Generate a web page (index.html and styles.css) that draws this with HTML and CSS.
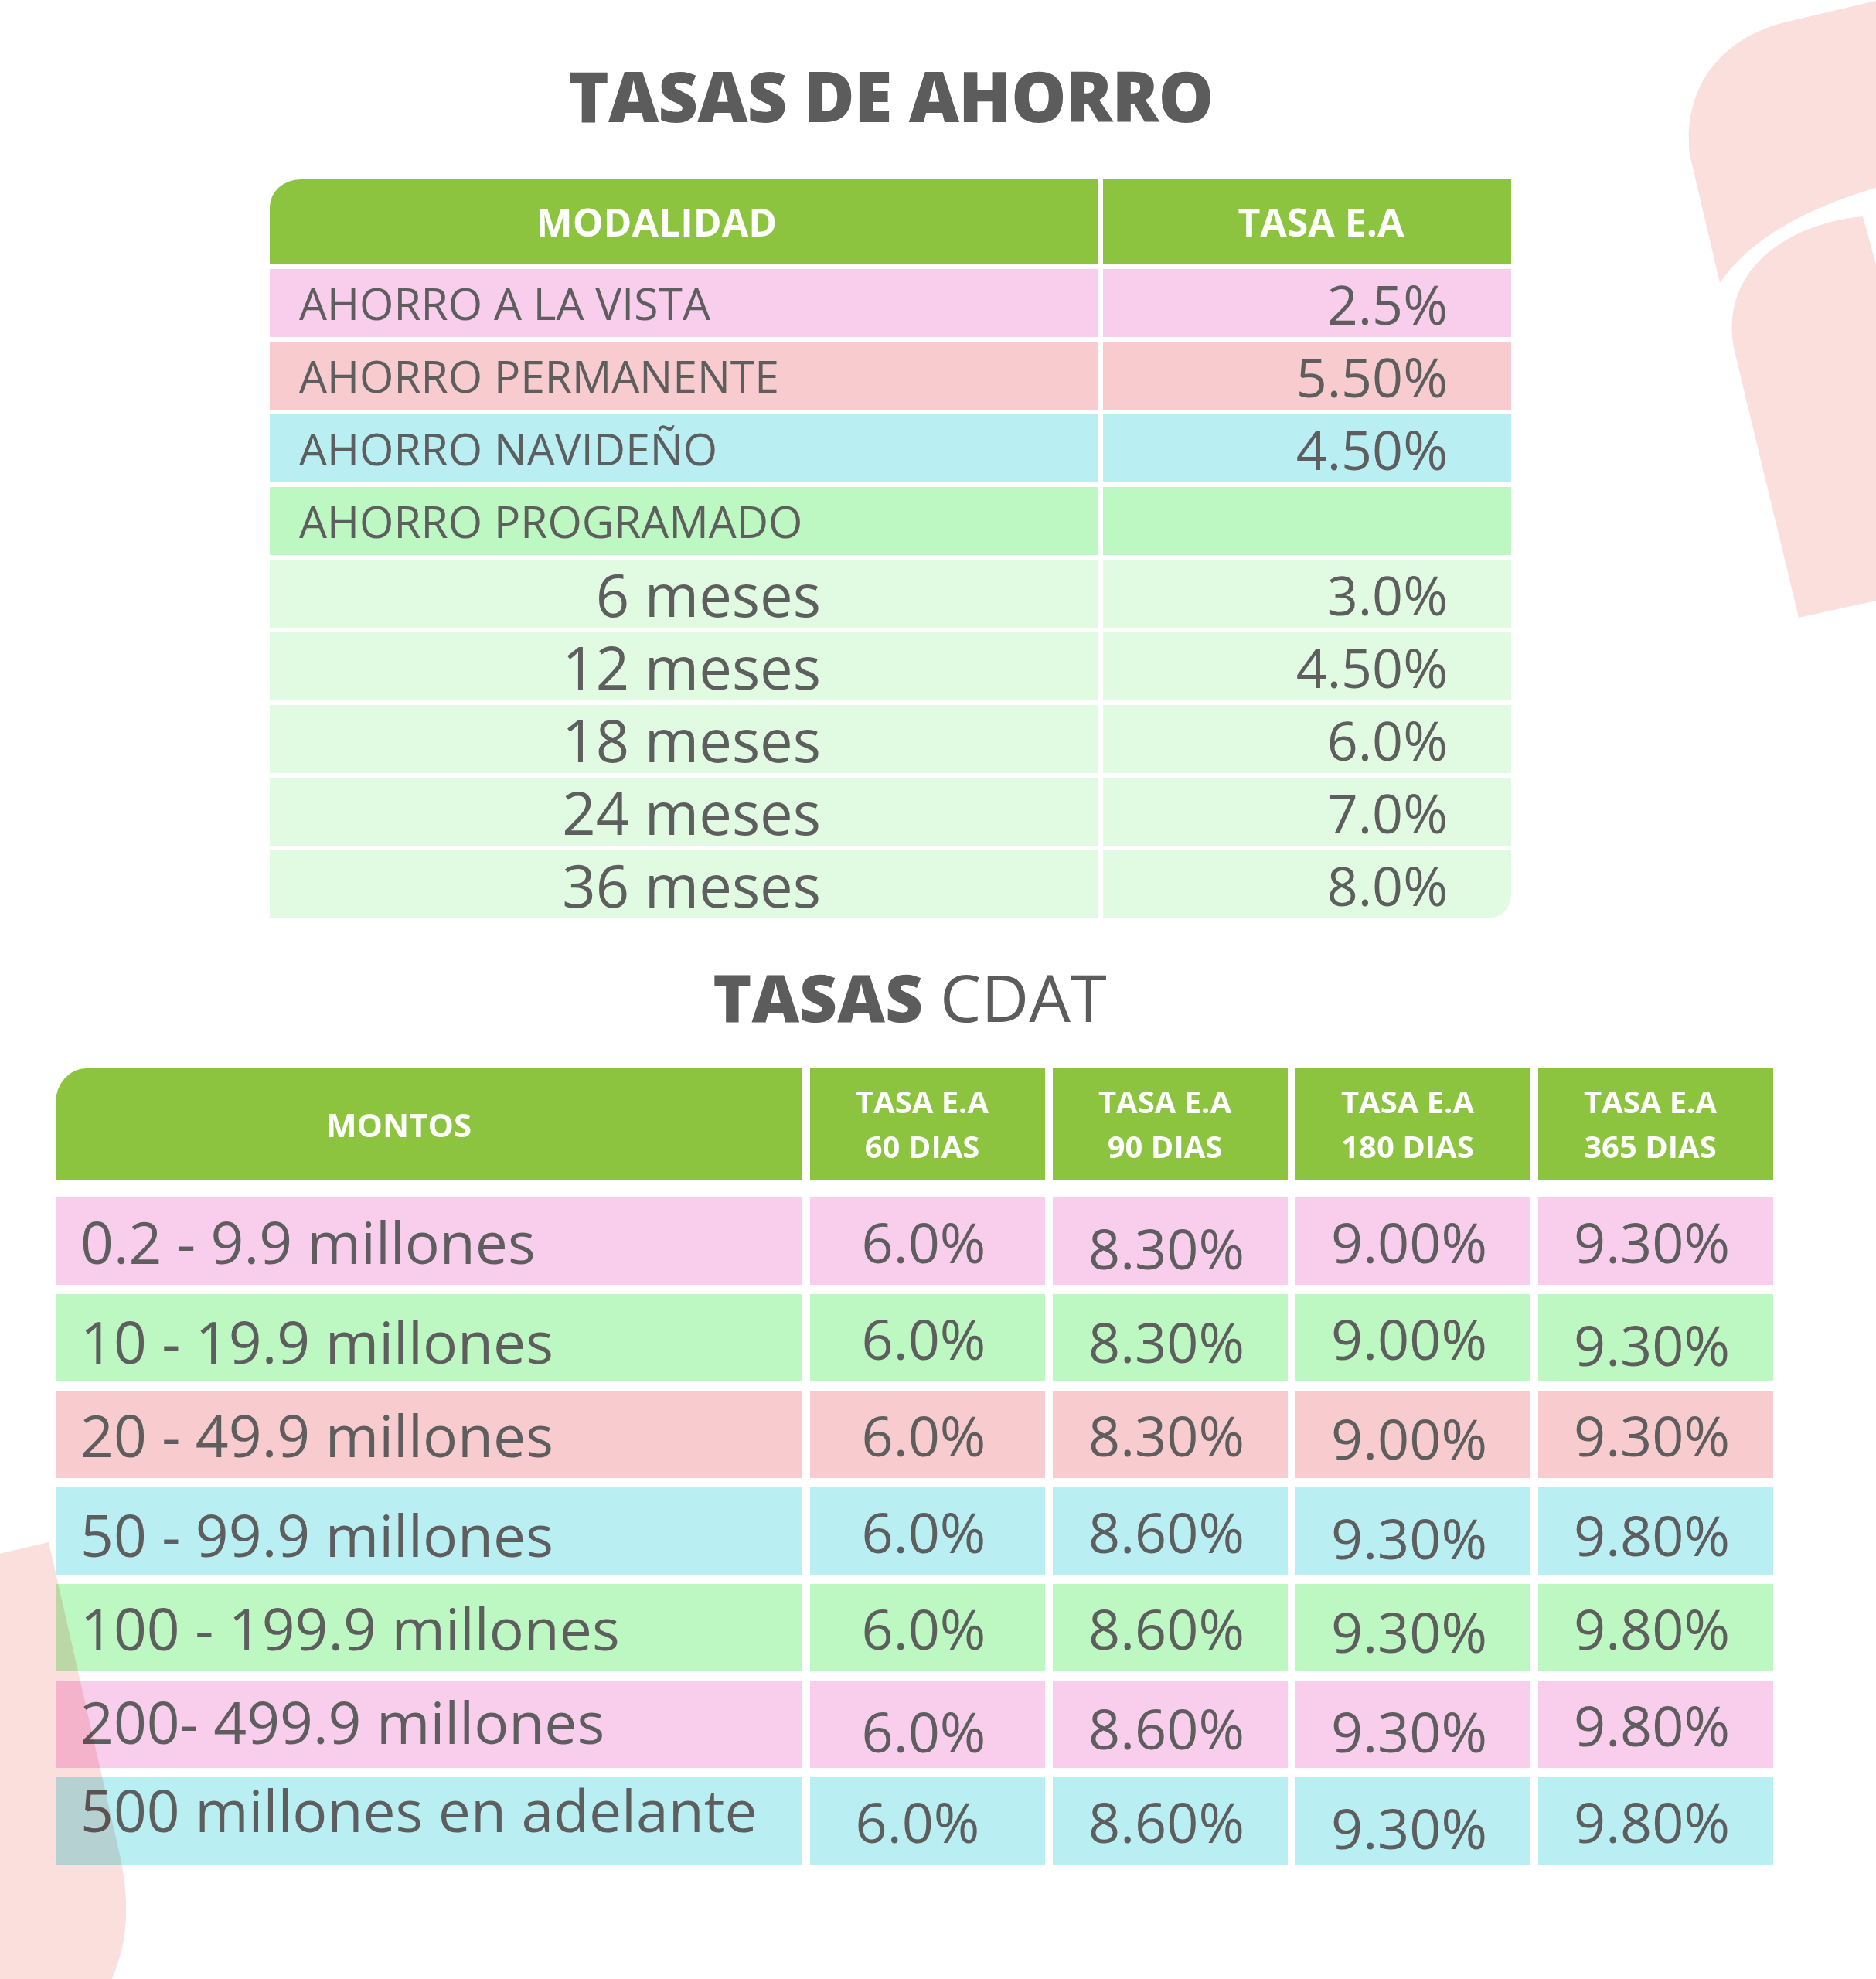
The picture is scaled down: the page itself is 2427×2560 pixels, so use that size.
FILE: index.html
```html
<!DOCTYPE html>
<html lang="es">
<head>
<meta charset="utf-8">
<title>Tasas de ahorro</title>
<link rel="stylesheet" href="styles.css">
</head>
<body>
<div class="page">
  <section class="block block-ahorro">
    <h1 class="title">TASAS DE AHORRO</h1>
    <div class="grid grid-ahorro">
      <div class="hcell h-mod">MODALIDAD</div>
      <div class="hcell h-tasa">TASA E.A</div>

      <div class="cell name pink">AHORRO A LA VISTA</div>
      <div class="cell rate pink">2.5%</div>

      <div class="cell name salmon">AHORRO PERMANENTE</div>
      <div class="cell rate salmon">5.50%</div>

      <div class="cell name cyan">AHORRO NAVIDEÑO</div>
      <div class="cell rate cyan">4.50%</div>

      <div class="cell name green">AHORRO PROGRAMADO</div>
      <div class="cell rate green"></div>

      <div class="cell term mint">6 meses</div>
      <div class="cell rate mint">3.0%</div>

      <div class="cell term mint">12 meses</div>
      <div class="cell rate mint">4.50%</div>

      <div class="cell term mint">18 meses</div>
      <div class="cell rate mint">6.0%</div>

      <div class="cell term mint">24 meses</div>
      <div class="cell rate mint">7.0%</div>

      <div class="cell term mint">36 meses</div>
      <div class="cell rate mint corner-br">8.0%</div>
    </div>
  </section>

  <section class="block block-cdat">
    <h2 class="title title-cdat"><b>TASAS</b> CDAT</h2>
    <div class="grid grid-cdat">
      <div class="hcell h-montos">MONTOS</div>
      <div class="hcell h-dias">TASA E.A<br>60 DIAS</div>
      <div class="hcell h-dias">TASA E.A<br>90 DIAS</div>
      <div class="hcell h-dias">TASA E.A<br>180 DIAS</div>
      <div class="hcell h-dias">TASA E.A<br>365 DIAS</div>

      <div class="cell amt pink">0.2 - 9.9 millones</div>
      <div class="cell val pink">6.0%</div>
      <div class="cell val pink dn">8.30%</div>
      <div class="cell val pink">9.00%</div>
      <div class="cell val pink">9.30%</div>

      <div class="cell amt green dn-s">10 - 19.9 millones</div>
      <div class="cell val green">6.0%</div>
      <div class="cell val green dn-s">8.30%</div>
      <div class="cell val green">9.00%</div>
      <div class="cell val green dn">9.30%</div>

      <div class="cell amt salmon">20 - 49.9 millones</div>
      <div class="cell val salmon">6.0%</div>
      <div class="cell val salmon">8.30%</div>
      <div class="cell val salmon dn-s">9.00%</div>
      <div class="cell val salmon">9.30%</div>

      <div class="cell amt cyan dn-s">50 - 99.9 millones</div>
      <div class="cell val cyan">6.0%</div>
      <div class="cell val cyan">8.60%</div>
      <div class="cell val cyan dn">9.30%</div>
      <div class="cell val cyan dn-s">9.80%</div>

      <div class="cell amt green">100 - 199.9 millones</div>
      <div class="cell val green">6.0%</div>
      <div class="cell val green">8.60%</div>
      <div class="cell val green dn-s">9.30%</div>
      <div class="cell val green">9.80%</div>

      <div class="cell amt pink up-s">200- 499.9 millones</div>
      <div class="cell val pink dn">6.0%</div>
      <div class="cell val pink dn-s">8.60%</div>
      <div class="cell val pink dn">9.30%</div>
      <div class="cell val pink">9.80%</div>

      <div class="cell amt cyan up">500 millones en adelante</div>
      <div class="cell val cyan shift-l">6.0%</div>
      <div class="cell val cyan">8.60%</div>
      <div class="cell val cyan dn">9.30%</div>
      <div class="cell val cyan">9.80%</div>
    </div>
  </section>

  <svg class="decor" viewBox="0 0 2427 2560" width="2427" height="2560" aria-hidden="true">
    <path d="M 2440 -2 L 2317 27 C 2230 45 2176 110 2186 200 L 2225 366 C 2262 312 2330 270 2440 239 Z"/>
    <path d="M 2410 280 L 2440 390 L 2440 774 L 2327 799 L 2243 450 C 2225 350 2310 290 2410 280 Z"/>
    <path d="M -10 2012 L 63 1995 L 154 2395 C 170 2465 165 2520 140 2570 L -10 2570 Z"/>
  </svg>
</div>
</body>
</html>
```

FILE: styles.css
```css
html, body {
  margin: 0;
  padding: 0;
  background: #ffffff;
}

.page {
  position: relative;
  width: 2427px;
  height: 2560px;
  overflow: hidden;
  font-family: "Open Sans", "Liberation Sans", sans-serif;
  color: #5e5e5e;
}

.block {
  display: flex;
  flex-direction: column;
}

.block-ahorro {
  margin-left: 349px;
  width: 1606px;
  padding-top: 78px;
}

.block-cdat {
  margin-left: 72px;
  width: 2222px;
  margin-top: 59px;
}

.title {
  margin: 0;
  font-size: 90px;
  line-height: 90px;
  font-weight: 800;
  text-align: center;
  color: #5c5c5c;
  letter-spacing: -1px;
}

.title-cdat {
  font-size: 85px;
  line-height: 85px;
  font-weight: 400;
  letter-spacing: 0;
  padding-right: 12px;
}

.title-cdat b {
  font-weight: 800;
}

.grid {
  display: grid;
}

.grid-ahorro {
  margin-top: 64px;
  grid-template-columns: 1071px 528px;
  grid-template-rows: 110px repeat(9, 88px);
  column-gap: 7px;
  row-gap: 6px;
}

.grid-cdat {
  margin-top: 50px;
  grid-template-columns: 966px repeat(4, 304px);
  grid-template-rows: 155px repeat(7, 113px);
  column-gap: 10px;
  row-gap: 12px;
}

.hcell {
  background: #8cc43f;
  color: #ffffff;
  font-weight: 700;
  display: flex;
  align-items: center;
  justify-content: center;
  text-align: center;
}

.grid-ahorro .hcell {
  font-size: 50px;
}

.h-mod {
  border-top-left-radius: 40px 36px;
  padding-right: 70px;
}

.h-tasa {
  padding-left: 36px;
}

.grid-cdat .hcell {
  height: 144px;
  align-self: start;
}

.h-montos {
  font-size: 42px;
  padding-right: 78px;
  border-top-left-radius: 40px 44px;
}

.h-dias {
  font-size: 40px;
  line-height: 58px;
  padding-right: 14px;
}

.cell {
  display: flex;
  align-items: center;
  box-sizing: border-box;
  white-space: nowrap;
}

.name {
  padding-left: 38px;
  font-size: 57px;
}

.term {
  justify-content: flex-end;
  padding-right: 358px;
  font-size: 76px;
}

.rate {
  justify-content: flex-end;
  padding-right: 82px;
  font-size: 70px;
  padding-top: 2px;
}

.corner-br {
  border-bottom-right-radius: 30px;
}

.amt {
  padding-left: 32px;
  font-size: 75px;
}

.val {
  justify-content: center;
  font-size: 72px;
  padding-right: 10px;
}

.dn { padding-top: 16px; }
.dn-s { padding-top: 8px; }
.up { padding-bottom: 30px; }
.up-s { padding-bottom: 8px; }
.shift-l { padding-right: 26px; }

.pink { background: #f9cdec; }
.salmon { background: #f8cbcf; }
.cyan { background: #b9eff3; }
.green { background: #bdf7c1; }
.mint { background: #e1fbe2; }

.decor {
  position: absolute;
  top: 0;
  left: 0;
  pointer-events: none;
  mix-blend-mode: multiply;
  fill: #fbdfdc;
}
```
